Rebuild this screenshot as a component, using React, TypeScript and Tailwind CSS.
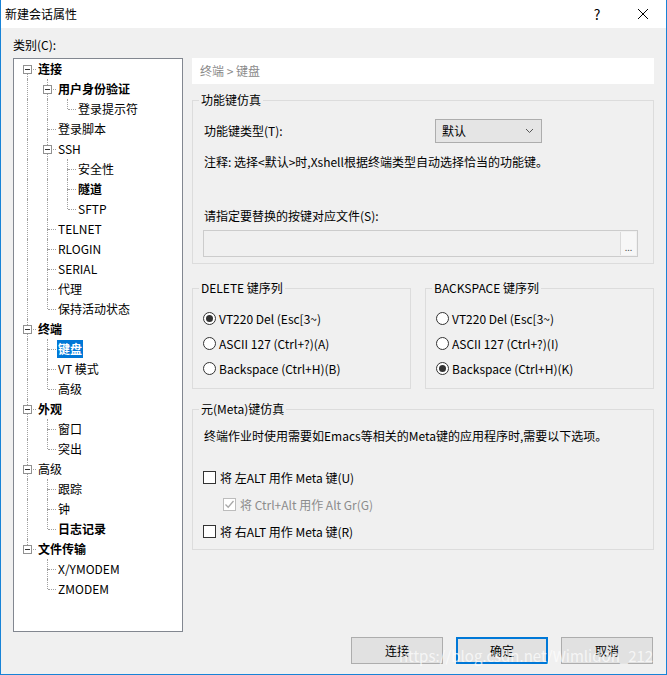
import React from 'react';

type Node = { label: string; level: number; bold?: boolean; box?: boolean; selected?: boolean };

const TREE: Node[] = [
  { label: '连接', level: 0, bold: true, box: true },
  { label: '用户身份验证', level: 1, bold: true, box: true },
  { label: '登录提示符', level: 2 },
  { label: '登录脚本', level: 1 },
  { label: 'SSH', level: 1, box: true },
  { label: '安全性', level: 2 },
  { label: '隧道', level: 2, bold: true },
  { label: 'SFTP', level: 2 },
  { label: 'TELNET', level: 1 },
  { label: 'RLOGIN', level: 1 },
  { label: 'SERIAL', level: 1 },
  { label: '代理', level: 1 },
  { label: '保持活动状态', level: 1 },
  { label: '终端', level: 0, bold: true, box: true },
  { label: '键盘', level: 1, bold: true, selected: true },
  { label: 'VT 模式', level: 1 },
  { label: '高级', level: 1 },
  { label: '外观', level: 0, bold: true, box: true },
  { label: '窗口', level: 1 },
  { label: '突出', level: 1 },
  { label: '高级', level: 0, box: true },
  { label: '跟踪', level: 1 },
  { label: '钟', level: 1 },
  { label: '日志记录', level: 1, bold: true },
  { label: '文件传输', level: 0, bold: true, box: true },
  { label: 'X/YMODEM', level: 1 },
  { label: 'ZMODEM', level: 1 },
];

// does node i have a later sibling (same level, before any shallower node)?
const hasNext = (i: number) => {
  const lv = TREE[i].level;
  for (let j = i + 1; j < TREE.length; j++) {
    if (TREE[j].level < lv) return false;
    if (TREE[j].level === lv) return true;
  }
  return false;
};

// for row i, the ancestor at given level
const ancestorAt = (i: number, lv: number) => {
  for (let j = i; j >= 0; j--) if (TREE[j].level === lv) return j;
  return -1;
};

const font = { fontFamily: '"Noto Sans CJK SC", "Noto Sans", sans-serif' };

function TreeRow({ node, index }: { node: Node; index: number }) {
  const cols = [];
  for (let c = 0; c < node.level; c++) {
    const a = ancestorAt(index, c);
    cols.push(
      <div key={c} className="relative w-[20px] h-full shrink-0">
        {hasNext(a) && <div className="absolute left-[10px] top-0 bottom-0 border-l border-dotted border-[#a0a0a0]" />}
      </div>
    );
  }
  const first = index === 0;
  return (
    <div className="flex h-[20px] items-center">
      {cols}
      <div className="relative w-[20px] h-full shrink-0">
        {!first && <div className="absolute left-[10px] top-0 h-[10px] border-l border-dotted border-[#a0a0a0]" />}
        {hasNext(index) && <div className="absolute left-[10px] top-[10px] bottom-0 border-l border-dotted border-[#a0a0a0]" />}
        <div className="absolute left-[11px] top-[10px] w-[8px] border-t border-dotted border-[#a0a0a0]" />
        {node.box && (
          <div className="absolute left-[6px] top-[6px] w-[9px] h-[9px] border border-[#919191] bg-white flex items-center justify-center">
            <div className="w-[5px] h-px bg-[#333]" />
          </div>
        )}
      </div>
      <span
        className={`text-[12px] leading-[18px] px-[1px] whitespace-nowrap ${node.bold ? 'font-bold' : ''} ${
          node.selected ? 'bg-[#0078d7] text-white' : 'text-black'
        }`}
      >
        {node.label}
      </span>
    </div>
  );
}

function Radio({ checked, label }: { checked?: boolean; label: string }) {
  return (
    <div className="flex items-center h-[25px] gap-[3px]">
      <div className="w-[13px] h-[13px] rounded-full border border-[#333] bg-white flex items-center justify-center">
        {checked && <div className="w-[7px] h-[7px] rounded-full bg-[#333]" />}
      </div>
      <span className="text-[12px]">{label}</span>
    </div>
  );
}

function Check({ label, disabled, checked }: { label: string; disabled?: boolean; checked?: boolean }) {
  return (
    <div className={`flex items-center h-[27px] gap-[4px] ${disabled ? 'pl-[20px] text-[#8c8c8c]' : 'text-black'}`}>
      <div
        className={`w-[13px] h-[13px] border bg-white flex items-center justify-center ${
          disabled ? 'border-[#bcbcbc]' : 'border-[#333]'
        }`}
      >
        {checked && (
          <svg width="11" height="11" viewBox="0 0 11 11">
            <path d="M1.5 5.5 L4.2 8.2 L9.5 2" fill="none" stroke="#a8a8a8" strokeWidth="1.3" />
          </svg>
        )}
      </div>
      <span className="text-[12px]">{label}</span>
    </div>
  );
}

function Group({ title, className, children }: { title: string; className?: string; children: React.ReactNode }) {
  return (
    <fieldset className={`border border-[#dcdcdc] px-[10px] ${className ?? ''}`}>
      <legend className="-ml-[4px] px-[2px] text-[12px] leading-[16px]">{title}</legend>
      {children}
    </fieldset>
  );
}

function Button({ label, primary }: { label: string; primary?: boolean }) {
  return (
    <div
      className={`w-[92px] h-[27px] flex items-center justify-center text-[12px] bg-[#e1e1e1] ${
        primary ? 'border-2 border-[#0078d7]' : 'border border-[#adadad]'
      }`}
    >
      {label}
    </div>
  );
}

export default function App() {
  return (
    <div
      className="relative w-[667px] h-[675px] bg-[#f0f0f0] border-x border-b border-[#1883d7] flex flex-col overflow-hidden text-black"
      style={font}
    >
      {/* title bar */}
      <div className="h-[28px] bg-white flex items-center pl-[4px] shrink-0">
        <span className="text-[12px] flex-1">新建会话属性</span>
        <span className="text-[14px] w-[46px] text-center">?</span>
        <svg width="46" height="28" viewBox="0 0 46 28">
          <path d="M18 9 L28 19 M28 9 L18 19" stroke="#000" strokeWidth="1" />
        </svg>
      </div>

      <div className="flex flex-col flex-1 pl-[12px] pr-[12px]">
        <div className="text-[12px] h-[30px] pt-[8px]">类别(C):</div>

        <div className="flex gap-[9px] h-[574px]">
          {/* tree */}
          <div className="w-[171px] h-[574px] bg-white border border-[#828790] pl-[3px]">
            {TREE.map((n, i) => (
              <TreeRow key={i} node={n} index={i} />
            ))}
          </div>

          {/* right panel */}
          <div className="w-[463px] flex flex-col">
            <div className="h-[26px] bg-white flex items-center pl-[8px] text-[12px] text-[#8a8a8a]">终端 &gt; 键盘</div>

            <Group title="功能键仿真" className="mt-[8px] h-[172px]">
              <div className="flex items-center h-[24px] mt-[11px]">
                <span className="text-[12px] pl-[1px] w-[232px]">功能键类型(T):</span>
                <div className="w-[107px] h-[24px] bg-[#e5e5e5] border border-[#adadad] flex items-center pl-[6px] pr-[7px] justify-between text-[12px]">
                  <span>默认</span>
                  <svg width="9" height="6" viewBox="0 0 9 6">
                    <path d="M1 1 L4.5 4.5 L8 1" fill="none" stroke="#555" strokeWidth="1" />
                  </svg>
                </div>
              </div>
              <div className="text-[12px] h-[18px] mt-[10px] pl-[1px]">注释: 选择&lt;默认&gt;时,Xshell根据终端类型自动选择恰当的功能键。</div>
              <div className="text-[12px] h-[18px] mt-[36px] pl-[1px]">请指定要替换的按键对应文件(S):</div>
              <div className="mt-[5px] w-[435px] h-[27px] border border-[#cccccc] bg-[#f0f0f0] flex justify-end p-[1px]">
                <div className="w-[16px] h-full bg-[#f7f7f7] border-l border-[#dadada] flex items-end justify-center pb-[3px] text-[9px] leading-none text-[#555]">
                  ...
                </div>
              </div>
            </Group>

            <div className="flex gap-[14px] mt-[16px]">
              <Group title="DELETE 键序列" className="w-[219px] h-[109px]">
                <div className="mt-[10px]">
                  <Radio checked label="VT220 Del (Esc[3~)" />
                  <Radio label="ASCII 127 (Ctrl+?)(A)" />
                  <Radio label="Backspace (Ctrl+H)(B)" />
                </div>
              </Group>
              <Group title="BACKSPACE 键序列" className="w-[229px] h-[109px]">
                <div className="mt-[10px]">
                  <Radio label="VT220 Del (Esc[3~)" />
                  <Radio label="ASCII 127 (Ctrl+?)(I)" />
                  <Radio checked label="Backspace (Ctrl+H)(K)" />
                </div>
              </Group>
            </div>

            <Group title="元(Meta)键仿真" className="mt-[12px] h-[149px]">
              <div className="text-[12px] h-[18px] mt-[10px] pl-[1px]">终端作业时使用需要如Emacs等相关的Meta键的应用程序时,需要以下选项。</div>
              <div className="mt-[19px]">
                <Check label="将 左ALT 用作 Meta 键(U)" />
                <Check label="将 Ctrl+Alt 用作 Alt Gr(G)" disabled checked />
                <Check label="将 右ALT 用作 Meta 键(R)" />
              </div>
            </Group>
          </div>
        </div>

        <div className="flex justify-end gap-[13px] mt-[5px] pr-[1px]">
          <Button label="连接" />
          <Button label="确定" primary />
          <Button label="取消" />
        </div>
      </div>

      <div className="absolute left-[398px] top-[645px] text-[15px] text-white/70 pointer-events-none whitespace-nowrap">
        https://blog.csdn.net/Wimlidon_212
      </div>
    </div>
  );
}
